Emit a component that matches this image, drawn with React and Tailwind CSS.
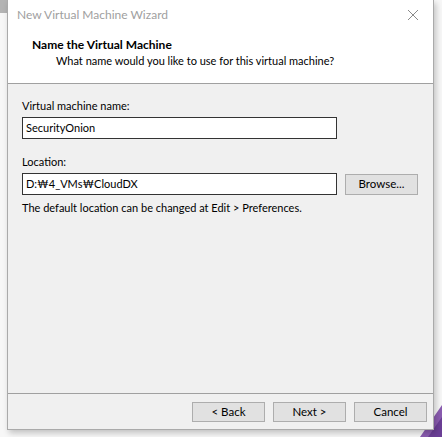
import React from 'react';

const font = { fontFamily: 'Lato, "Noto Sans", "Liberation Sans", sans-serif' };

const WizButton = ({ children }) => (
  <button className="h-[20px] w-[73px] border border-[#adadad] bg-[#e1e1e1] text-[11.5px] leading-none text-black">
    {children}
  </button>
);

const App = () => {
  return (
    <div className="relative h-[437px] w-[442px] overflow-hidden bg-[#f7f7f7]" style={font}>
      {/* desktop bits peeking out behind the window */}
      <div className="absolute left-0 top-0 h-[13px] w-[20px] bg-[#b4b4b4]" />
      <svg className="absolute bottom-0 right-0" width="40" height="40" viewBox="0 0 40 40">
        <polygon points="18,40 40,8 40,40" fill="#8a5cb0" />
        <polygon points="26,40 40,20 40,40" fill="#6b3f96" />
      </svg>

      <div className="relative ml-[7px] flex h-[430px] w-[427px] flex-col border-x border-b border-[#aaaaaa] bg-[#f0f0f0] shadow-[2px_3px_6px_rgba(0,0,0,0.22)]">
        {/* title bar + header */}
        <div className="h-[84px] border-b border-[#a0a0a0] bg-white">
          <div className="flex h-[30px] items-center justify-between pl-[9px] pr-[14px]">
            <span className="text-[12px] text-[#a0a0a0]">New Virtual Machine Wizard</span>
            <svg width="12" height="12" viewBox="0 0 12 12">
              <path d="M1 1L11 11M11 1L1 11" stroke="#8a8a8a" strokeWidth="1" />
            </svg>
          </div>
          <div className="pl-[24px] pt-[7px]">
            <div className="text-[12px] font-bold leading-[16px] text-black">Name the Virtual Machine</div>
            <div className="pl-[24px] text-[11px] leading-[16px] text-black">
              What name would you like to use for this virtual machine?
            </div>
          </div>
        </div>

        {/* body */}
        <div className="flex-1 px-[14px] pt-[14px] text-[11px] text-black">
          <div className="leading-[16px]">Virtual machine name:</div>
          <div className="mt-[3px] flex h-[22px] w-[315px] items-center border border-[#333333] bg-white pl-[3px]">
            SecurityOnion
          </div>
          <div className="mt-[15px] leading-[16px]">Location:</div>
          <div className="mt-[3px] flex items-center gap-[8px]">
            <div className="flex h-[22px] w-[315px] items-center border border-[#333333] bg-white pl-[3px]">
              D:₩4_VMs₩CloudDX
            </div>
            <button className="h-[21px] w-[73px] border border-[#adadad] bg-[#e1e1e1] text-[11.5px] leading-none">
              Browse...
            </button>
          </div>
          <div className="mt-[5px] leading-[16px]">The default location can be changed at Edit &gt; Preferences.</div>
        </div>

        {/* footer */}
        <div className="flex h-[36px] items-start justify-end gap-[8px] border-t border-[#a0a0a0] pr-[6px] pt-[8px]">
          <WizButton>&lt; Back</WizButton>
          <WizButton>Next &gt;</WizButton>
          <WizButton>Cancel</WizButton>
        </div>
      </div>
    </div>
  );
};

export default App;
